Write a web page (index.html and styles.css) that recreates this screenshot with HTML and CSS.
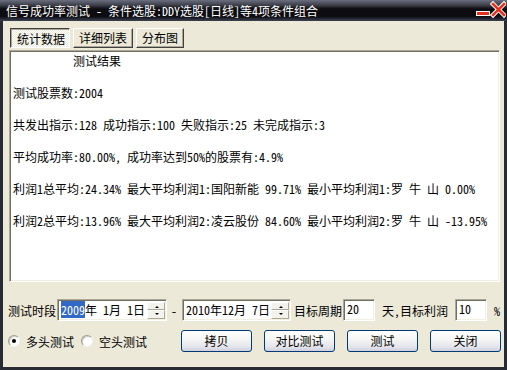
FILE: index.html
```html
<!DOCTYPE html>
<html lang="zh-CN">
<head>
    <meta charset="UTF-8">
    <title>信号成功率测试</title>
    <link rel="stylesheet" href="styles.css">
</head>
<body>
<div class="window">
    <div class="titlebar">
        <span class="title">信号成功率测试 - 条件选股:DDY选股[日线]等4项条件组合</span>
        <svg class="controls" width="30" height="21" viewBox="0 0 30 21">
            <!-- minimize -->
            <rect x="0.5" y="11.5" width="13" height="4" fill="#e8301c" stroke="#ffffff" stroke-width="1"/>
            <!-- close -->
            <path d="M17 4 L28 15 M28 4 L17 15" stroke="#ffffff" stroke-width="4.5" stroke-linecap="square"/>
            <path d="M17 4 L28 15 M28 4 L17 15" stroke="#e8301c" stroke-width="2.5" stroke-linecap="square"/>
        </svg>
    </div>

    <div class="frame">
        <div class="tabs">
            <button class="tab pressed" type="button"><span>统计数据</span></button>
            <button class="tab" type="button">详细列表</button>
            <button class="tab narrow" type="button">分布图</button>
        </div>

        <div class="report">
            <div class="line">          测试结果</div>
            <div class="line"></div>
            <div class="line">测试股票数:2004</div>
            <div class="line"></div>
            <div class="line">共发出指示:128 成功指示:100 失败指示:25 未完成指示:3</div>
            <div class="line"></div>
            <div class="line">平均成功率:80.00%, 成功率达到50%的股票有:4.9%</div>
            <div class="line"></div>
            <div class="line">利润1总平均:24.34% 最大平均利润1:国阳新能 99.71% 最小平均利润1:罗 牛 山 0.00%</div>
            <div class="line"></div>
            <div class="line">利润2总平均:13.96% 最大平均利润2:凌云股份 84.60% 最小平均利润2:罗 牛 山 -13.95%</div>
        </div>

        <div class="row params">
            <span class="label period">测试时段</span>
            <div class="datebox first">
                <span class="datetext"><span class="sel">2009</span>年 1月 1日</span>
                <div class="spin">
                    <span class="spin-btn up"></span>
                    <span class="spin-btn down"></span>
                </div>
            </div>
            <span class="dash">-</span>
            <div class="datebox second">
                <span class="datetext">2010年12月 7日</span>
                <div class="spin">
                    <span class="spin-btn up"></span>
                    <span class="spin-btn down"></span>
                </div>
            </div>
            <span class="label target">目标周期</span>
            <div class="field">20</div>
            <span class="label profit">天,目标利润</span>
            <div class="field">10</div>
            <span class="label pct">%</span>
        </div>

        <div class="row actions">
            <label class="radio first"><span class="dot checked"></span>多头测试</label>
            <label class="radio"><span class="dot"></span>空头测试</label>
            <div class="buttons">
                <button class="btn" type="button">拷贝</button>
                <button class="btn" type="button">对比测试</button>
                <button class="btn" type="button">测试</button>
                <button class="btn" type="button">关闭</button>
            </div>
        </div>
    </div>
</div>
</body>
</html>
```

FILE: styles.css
```css
/* Global */
html, body {
    margin: 0;
    padding: 0;
    background: #ffffff;
}

body, button {
    font-family: "Noto Sans Mono CJK SC", "Noto Sans CJK SC", "DejaVu Sans Mono", monospace;
    font-size: 12px;
    color: #000000;
}

.window {
    width: 507px;
    height: 370px;
    display: flex;
    flex-direction: column;
}

/* Title bar */
.titlebar {
    height: 21px;
    flex: none;
    display: flex;
    align-items: center;
    justify-content: space-between;
    padding-left: 6px;
    background: linear-gradient(#6a6e7e 0, #3c3e48 25%, #0d0d12 42%, #0b0b10 78%, #3d4252 100%);
    color: #ffffff;
}

.title {
    line-height: 21px;
    white-space: pre;
}

.controls {
    display: block;
    margin-right: 1px;
}

/* Dialog body */
.frame {
    flex: 1;
    display: flex;
    flex-direction: column;
    background: #ece9d8;
    border: 3px solid #282a34;
    border-top: none;
}

/* Tab buttons */
.tabs {
    display: flex;
    gap: 3px;
    margin: 7px 0 0 7px;
}

.tab {
    width: 60px;
    height: 20px;
    padding: 0;
    line-height: 16px;
    background: #ece9d8;
    border: 1px solid;
    border-color: #ffffff #404040 #404040 #ffffff;
    box-shadow: inset -1px -1px #aca899;
}

.tab.narrow {
    width: 48px;
}

.tab.pressed {
    border-color: #404040 #ffffff #ffffff #404040;
    box-shadow: inset 1px 1px #aca899;
    background: repeating-conic-gradient(#ffffff 0 25%, #ece9d8 0 50%) 0 0 / 2px 2px;
}

.tab.pressed span {
    position: relative;
    top: 1px;
    left: 1px;
}

/* Report text area */
.report {
    width: 491px;
    height: 232px;
    box-sizing: border-box;
    margin: 2px 0 0 6px;
    padding: 2px 2px;
    background: #ffffff;
    border: 1px solid;
    border-color: #aca899 #ffffff #ffffff #aca899;
    box-shadow: inset 1px 1px #716f64, inset -1px -1px #f1efe2;
    overflow: hidden;
}

.line {
    height: 16px;
    line-height: 16px;
    padding-left: 1px;
    white-space: pre;
}

/* Bottom rows */
.row {
    display: flex;
    align-items: center;
    height: 22px;
}

.params {
    margin: 17px 0 0 5px;
}

.actions {
    margin: 9px 0 0 5px;
}

.label {
    white-space: pre;
}

.target {
    margin-left: 3px;
}

.profit {
    width: 72px;
    margin-left: 7px;
    word-spacing: -3px;
}

.profit::first-letter {
    letter-spacing: 0;
}

.pct {
    margin-left: 7px;
}

.datebox,
.field {
    height: 22px;
    box-sizing: border-box;
    background: #ffffff;
    border: 1px solid;
    border-color: #aca899 #ffffff #ffffff #aca899;
    box-shadow: inset 1px 1px #716f64, inset -1px -1px #f1efe2;
}

.datebox {
    display: flex;
    align-items: center;
    margin-left: 1px;
    padding: 0 1px 0 3px;
}

.datebox.first {
    width: 110px;
}

.datebox.second {
    width: 109px;
}

.datetext {
    white-space: pre;
    line-height: 14px;
}

.sel {
    background: #316ac5;
    color: #ffffff;
}

.dash {
    width: 14px;
    text-align: center;
}

.spin {
    margin-left: auto;
    width: 18px;
    height: 17px;
    display: flex;
    flex-direction: column;
}

.spin-btn {
    flex: 1;
    position: relative;
    background: #f3f2ec;
    border: 1px solid;
    border-color: #ffffff #aca899 #aca899 #ffffff;
}

.spin-btn::after {
    content: "";
    position: absolute;
    left: 7px;
    top: 3px;
    border-left: 2px solid transparent;
    border-right: 2px solid transparent;
}

.spin-btn.up::after {
    border-bottom: 2px solid #000000;
}

.spin-btn.down::after {
    top: 2px;
    border-top: 2px solid #000000;
}

.field {
    width: 32px;
    margin-left: 1px;
    padding: 2px 0 0 3px;
    line-height: 14px;
}

/* Radio options */
.radio {
    display: flex;
    align-items: center;
    gap: 6px;
    margin-left: 7px;
}

.radio.first {
    margin-left: 0;
}

.dot {
    width: 12px;
    height: 12px;
    box-sizing: border-box;
    border-radius: 50%;
    background: #ffffff;
    border: 1px solid;
    border-color: #9c9a90 #f4f3ee #f4f3ee #9c9a90;
    box-shadow: inset 1px 1px #d0cec4;
    display: flex;
    align-items: center;
    justify-content: center;
}

.dot.checked::after {
    content: "";
    width: 4px;
    height: 4px;
    border-radius: 50%;
    background: #000000;
}

/* Push buttons */
.buttons {
    display: flex;
    gap: 12px;
    margin-left: 34px;
}

.btn {
    width: 71px;
    height: 22px;
    padding: 0;
    border: 1px solid #003c74;
    border-radius: 3px;
    background: linear-gradient(#ffffff 0, #f6f6f4 40%, #e4e4ec 80%, #cfcfe0 100%);
    line-height: 18px;
}
```
